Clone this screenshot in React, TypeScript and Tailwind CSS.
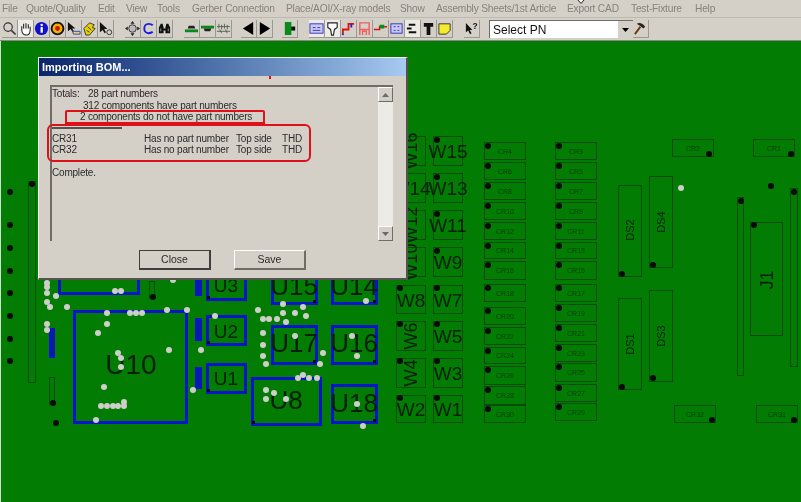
import React from "react";

const BT = 41;
const FONT = "font-['Liberation_Sans',Arial,sans-serif]";

const menu: [string, number][] = [
  ["File", 2], ["Quote/Quality", 26], ["Edit", 98], ["View", 126], ["Tools", 157],
  ["Gerber Connection", 192], ["Place/AOI/X-ray models", 286], ["Show", 400],
  ["Assembly Sheets/1st Article", 436], ["Export CAD", 567], ["Test-Fixture", 631], ["Help", 695],
];

type B = [number, number, number, number];
const boxes: B[] = [
  [395, 136, 30, 30], [432, 136, 30, 30], [395, 173, 30, 30], [432, 173, 30, 30],
  [395, 210, 30, 30], [432, 210, 30, 30], [395, 247, 30, 30], [432, 247, 30, 30],
  [395, 285, 30, 29], [432, 285, 30, 29], [395, 321, 30, 30], [432, 321, 30, 30],
  [395, 358, 30, 30], [432, 358, 30, 30], [395, 395, 30, 28], [432, 395, 30, 28],
];
const crCols: [number, [string, number, number][]][] = [
  [483, [["CR4", 142, 18], ["CR6", 162, 18], ["CR8", 182, 18], ["CR10", 202, 18], ["CR12", 222, 18], ["CR14", 242, 17], ["CR16", 261, 19], ["CR18", 284, 18], ["CR20", 307, 18], ["CR22", 327, 18], ["CR24", 347, 17], ["CR26", 366, 19], ["CR28", 386, 19], ["CR30", 405, 18]]],
  [554, [["CR3", 142, 18], ["CR5", 162, 18], ["CR7", 182, 18], ["CR9", 202, 18], ["CR11", 222, 18], ["CR13", 242, 17], ["CR15", 261, 19], ["CR17", 284, 18], ["CR19", 304, 18], ["CR21", 324, 18], ["CR23", 344, 18], ["CR25", 363, 19], ["CR27", 384, 18], ["CR29", 403, 18]]],
];
const crRight: [string, number, number][] = [["CR2", 671, 139], ["CR1", 752, 139], ["CR32", 673, 405], ["CR31", 755, 405]];
const outlines: B[] = [
  [617, 185, 24, 92], [648, 176, 24, 92], [617, 298, 24, 92], [648, 290, 24, 92],
  [736, 197, 7, 179], [789, 188, 8, 179], [749, 222, 33, 114], [27, 181, 8, 202], [148, 281, 6, 18], [48, 377, 6, 28],
];
const blue: B[] = [
  [72, 310, 115, 114], [57, 270, 82, 25], [205, 270, 41, 31], [205, 315, 41, 31], [205, 363, 41, 31],
  [270, 270, 47, 35], [330, 270, 47, 35], [270, 325, 47, 40], [330, 325, 47, 40], [250, 377, 71, 49], [330, 384, 47, 40],
];
const blueSmall: B[] = [[194, 280, 7, 16], [194, 318, 7, 23], [194, 367, 7, 22], [48, 328, 6, 30]];
const big: [string, number, number, number, number?][] = [
  ["W16", 410, 151, 18, -90], ["W15", 447, 151, 19], ["W14", 410, 188, 19], ["W13", 447, 188, 19],
  ["W12", 410, 225, 18, -90], ["W11", 447, 225, 19], ["W10", 410, 262, 18, -90], ["W9", 447, 262, 19],
  ["W8", 410, 300, 19], ["W7", 447, 300, 19], ["W6", 410, 336, 18, -90], ["W5", 447, 336, 19],
  ["W4", 410, 373, 18, -90], ["W3", 447, 373, 19], ["W2", 410, 409, 19], ["W1", 447, 409, 19],
  ["U10", 130, 365, 28], ["U3", 225, 285, 19], ["U2", 225, 331, 19], ["U1", 225, 378, 19],
  ["U15", 293, 286, 26], ["U14", 353, 286, 26], ["U17", 293, 343, 26], ["U16", 353, 343, 26],
  ["U8", 285, 400, 26], ["U18", 353, 403, 26], ["J1", 766, 280, 18, -90],
  ["DS2", 629, 230, 11, -90], ["DS4", 660, 222, 11, -90], ["DS1", 629, 344, 11, -90], ["DS3", 660, 336, 11, -90],
];
const blackDots: [number, number][] = [
  [9, 192], [9, 225], [9, 248], [9, 271], [9, 293], [9, 316], [9, 339], [9, 361], [31, 184], [52, 403], [55, 423], [152, 297],
  [621, 274], [652, 265], [770, 186], [740, 201], [793, 192], [753, 225], [621, 387], [652, 378],
  [708, 154], [790, 154], [711, 420], [793, 420],
  [399, 140], [436, 140], [399, 177], [436, 177], [436, 214], [436, 251], [399, 288], [436, 288], [399, 324], [436, 324], [399, 361], [436, 361], [399, 398], [436, 398],
];
const pins: [number, number][] = [[207, 297], [207, 342], [207, 390], [252, 422], [313, 301], [373, 301], [313, 361], [373, 361], [373, 420]];
const white: [number, number][] = [
  [46, 283], [46, 287], [46, 293], [55, 296], [46, 302], [49, 307], [66, 307], [46, 324], [46, 330], [114, 291], [120, 291], [172, 280],
  [106, 313], [129, 313], [135, 313], [141, 313], [166, 310], [186, 310], [106, 324], [97, 333], [117, 353], [120, 358], [120, 367], [168, 350],
  [103, 387], [123, 402], [100, 406], [106, 406], [112, 406], [117, 406], [123, 406], [95, 420], [200, 350], [192, 390], [214, 316], [257, 310],
  [262, 319], [268, 319], [276, 319], [282, 313], [282, 304], [302, 307], [294, 313], [305, 316], [285, 322], [262, 333], [262, 345], [262, 356],
  [265, 364], [294, 336], [322, 353], [319, 364], [351, 336], [356, 356], [365, 301], [297, 378], [302, 375], [308, 378], [316, 378], [265, 390],
  [273, 393], [265, 399], [285, 399], [356, 404], [362, 426], [680, 188],
];

const pos = (x: number, y: number, w?: number, h?: number) => ({ left: x, top: y - BT, width: w, height: h });

function CRBox({ name, x, y, h }: { name: string; x: number; y: number; h: number }) {
  return (
    <div className="absolute flex items-center justify-center border border-[#0a4a0a] text-[7px] leading-none text-[#063f06]" style={pos(x, y, 42, h)}>
      {name}
    </div>
  );
}

function Dot({ x, y, size, cls }: { x: number; y: number; size: number; cls: string }) {
  return <div className={`absolute rounded-full ${cls}`} style={pos(x - size / 2, y - size / 2, size, size)} />;
}

function Btn({ children, pressed }: { children: React.ReactNode; pressed?: boolean }) {
  return (
    <div className={`flex h-[18px] w-[16px] shrink-0 items-center justify-center border-r border-b border-[#9a9892] ${pressed ? "bg-[#ecebe6]" : ""}`}>
      <svg viewBox="0 0 16 16" className="h-[15px] w-[15px]">{children}</svg>
    </div>
  );
}

const Group = ({ children, ml }: { children: React.ReactNode; ml: string }) => (
  <div className={`flex shrink-0 ${ml}`}>{children}</div>
);

function Scroll({ up }: { up?: boolean }) {
  return (
    <div className="flex h-[15px] w-[15px] items-center justify-center border-t border-l border-white border-r border-b border-r-[#6f6d68] border-b-[#6f6d68] bg-[#d4d0c8]">
      <svg viewBox="0 0 7 4" className="h-[4px] w-[7px]"><path d={up ? "M0 4 3.5 0 7 4z" : "M0 0 3.5 4 7 0z"} fill="#6a6a66" /></svg>
    </div>
  );
}

export default function App() {
  return (
    <div className={`relative flex h-[502px] w-[801px] flex-col overflow-hidden bg-[#d4d0c8] blur-[0.35px] ${FONT}`}>
      <div className="relative h-[18px] shrink-0 border-b border-[#bdbab2] text-[10.2px] leading-[18px] tracking-[-0.2px] text-[#85837d]">
        {menu.map(([t, x]) => (
          <span key={t} className="absolute top-0 whitespace-nowrap" style={{ left: x }}>{t}</span>
        ))}
        <svg viewBox="0 0 8 5" className="absolute left-[577px] top-0 h-[5px] w-[8px]"><path d="M1 0 4 3.5 7 0" fill="#fff" stroke="#222" /></svg>
      </div>

      <div className="flex h-[23px] shrink-0 items-center border-b border-[#8a8882] pl-[2px]">
        <Group ml="ml-0">
          <Btn><circle cx="6.5" cy="6.5" r="4.5" fill="none" stroke="#333" strokeWidth="1.2" /><path d="M10 10l4.5 4.5" stroke="#333" strokeWidth="1.6" /></Btn>
          <Btn pressed><path d="M4 9V5.5M6 8V3M8.5 8V2.5M11 8V3.5M13 9V6M4 9c0 4 2 6 5 6s4-2 4-6" fill="#fff" stroke="#222" strokeWidth="1.1" /></Btn>
          <Btn><circle cx="8" cy="8" r="7" fill="#1111cc" /><rect x="7" y="6.5" width="2.4" height="6" fill="#fff" /><circle cx="8.2" cy="4.2" r="1.3" fill="#fff" /></Btn>
          <Btn><circle cx="8" cy="8" r="6.3" fill="#f2b400" stroke="#111" strokeWidth="2" /><circle cx="8" cy="8" r="2.6" fill="#cc1111" /></Btn>
          <Btn><path d="M2 1v10l3-2.5L7 12l1.5-1L6.5 8H10z" fill="#111" /><path d="M7 11h8v3H8z" fill="#e8d070" stroke="#3344bb" /></Btn>
          <Btn><path d="M2 8l6-6 5 2-2 3 3 1-6 7H4z" fill="#e6d000" stroke="#333" /><path d="M6 6l4 4M5 10l3 2" stroke="#333" /></Btn>
          <Btn><path d="M2 1v11l3-2.5L7 13l1.500-1L6.500 8.500H10z" fill="#111" /><circle cx="12" cy="12" r="2.6" fill="none" stroke="#333" /></Btn>
        </Group>
        <Group ml="ml-[11px]">
          <Btn><circle cx="8" cy="8" r="4" fill="#bbb" stroke="#333" /><path d="M8 0 5.8 3h4.4zM8 16l-2.2-3h4.4zM0 8l3-2.2v4.4zM16 8l-3-2.2v4.4z" fill="#222" /></Btn>
          <Btn><path d="M12.5 4.5C11 3 9.5 3 8 3 5 3 3.5 5.5 3.5 8S5 13 8 13c1.500 0 3 0 4.500-1.500" fill="none" stroke="#1a1ae0" strokeWidth="2" /></Btn>
          <Btn><path d="M2 13V7l2-4h2l1 4v1h2V7l1-4h2l2 4v6h-5V10H7v3z" fill="#111" /><path d="M4 8v3M12 8v3" stroke="#999" /></Btn>
        </Group>
        <Group ml="ml-[11px]">
          <Btn><path d="M5 5h6l1 3H4z" fill="#222" /><path d="M1 9h14v3H1z" fill="#0a8a1a" /></Btn>
          <Btn><path d="M1 5h14v3H1z" fill="#0a8a1a" /><path d="M4 8h8l-1 3H5z" fill="#222" /></Btn>
          <Btn><path d="M1 6h14M1 11h14M3 3v5M6 4v5M9 3v5M12 4v5M4 9l2 4M10 9l2 4" stroke="#4a5a4a" strokeWidth=".9" fill="none" /></Btn>
        </Group>
        <Group ml="ml-[9px]">
          <Btn><path d="M13 1v14L2 8z" fill="#000" /></Btn>
          <Btn><path d="M3 1v14l11-7z" fill="#000" /></Btn>
        </Group>
        <Group ml="ml-[9px]">
          <Btn><path d="M3 1h7v5h4v4h-4v5H3z" fill="#0a8a1a" /><rect x="10" y="6" width="4" height="4" fill="#111" /></Btn>
        </Group>
        <Group ml="ml-[11px]">
          <Btn pressed><rect x="1" y="3" width="14" height="10" fill="#c8c8f0" stroke="#3333bb" /><path d="M4 7h3M9 7h3M4 10h8" stroke="#3333bb" /></Btn>
          <Btn pressed><path d="M3 2h10v5l-3 2-1 6H7L6 9 3 7z" fill="#fff" stroke="#222" strokeWidth="1.200" /></Btn>
          <Btn><path d="M2 13V9h6V3h6" fill="none" stroke="#e01010" strokeWidth="2" /><path d="M11 3v4" stroke="#2222cc" strokeWidth="2" /><path d="M2 13v2" stroke="#2222cc" strokeWidth="2" /></Btn>
          <Btn><path d="M3 15V2h10v13M3 9h10M6 15v-4h4v4" fill="none" stroke="#ee6060" strokeWidth="1.500" /></Btn>
          <Btn><path d="M1 9h6V6h8" fill="none" stroke="#e01010" strokeWidth="1.600" /><rect x="7" y="4" width="5" height="4" fill="#0a8a1a" /></Btn>
          <Btn><rect x="2" y="3" width="12" height="10" fill="#c8c8f0" stroke="#3333bb" /><path d="M5 6h2M9 6h2M5 10h2M9 10h2" stroke="#3333bb" /></Btn>
          <Btn pressed><path d="M4 4h7M2 8h5M4 12h8" stroke="#111" strokeWidth="2" /></Btn>
          <Btn><path d="M3 2h10v4H10v9H6V6H3z" fill="#111" /></Btn>
          <Btn><path d="M2 3h12v7l-4 4H2z" fill="#f4ea30" stroke="#333" /></Btn>
        </Group>
        <Group ml="ml-[11px]">
          <Btn><path d="M2 2v10l2.500-2 2 4 1.500-1-2-3.500H9z" fill="#111" /><text x="9" y="9" fontSize="9" fontWeight="700" fill="#111">?</text></Btn>
        </Group>
        <div className="ml-[9px] flex h-[18px] w-[144px] shrink-0 items-center border-t border-l border-[#6f6d68] bg-white pl-[3px] text-[12px] text-[#111]">
          Select PN
          <div className="ml-auto flex h-full w-[15px] items-center justify-center bg-[#d4d0c8]">
            <svg viewBox="0 0 7 4" className="h-[4px] w-[7px]"><path d="M0 0 3.5 4 7 0z" fill="#000" /></svg>
          </div>
        </div>
        <Btn><path d="M8 6 2 14" stroke="#6a3a10" strokeWidth="2" /><path d="M4 3c3-2 6-1 9 3l-2 2C9 6 7 5 4 3z" fill="#222" /></Btn>
      </div>

      <div className="relative flex-1 border-l border-[#cfe3cf] bg-[#027c02]">
        {boxes.map(([x, y, w, h]) => (
          <div key={`${x}-${y}`} className="absolute border border-[#0a4a0a]" style={pos(x, y, w, h)} />
        ))}
        {crCols.map(([x, items]) => items.map(([n, y, h]) => <CRBox key={n} name={n} x={x} y={y} h={h} />))}
        {crCols.map(([x, items]) => items.map(([n, y]) => <Dot key={n} x={x + 4} y={y + 4} size={6} cls="bg-[#0a0a0a]" />))}
        {crRight.map(([n, x, y]) => <CRBox key={n} name={n} x={x} y={y} h={18} />)}
        {outlines.map(([x, y, w, h]) => (
          <div key={`${x}-${y}`} className="absolute border border-[#0a4a0a]" style={pos(x, y, w, h)} />
        ))}
        {blue.map(([x, y, w, h]) => (
          <div key={`${x}-${y}`} className="absolute border-[3px] border-[#0a14cc]" style={pos(x, y, w, h)} />
        ))}
        {blueSmall.map(([x, y, w, h]) => (
          <div key={`${x}-${y}`} className="absolute flex justify-center bg-[#0a14cc] py-[3px]" style={pos(x, y, w, h)}>
            <div className="w-[1px] bg-[#052a55]" />
          </div>
        ))}
        {big.map(([t, x, y, s, r]) => (
          <span
            key={t}
            className="absolute whitespace-nowrap leading-none text-[#041f06]"
            style={{ left: x, top: y - BT, fontSize: s, transform: `translate(-50%,-50%)${r ? ` rotate(${r}deg)` : ""}` }}
          >
            {t}
          </span>
        ))}
        {blackDots.map(([x, y]) => <Dot key={`${x}-${y}`} x={x} y={y} size={6} cls="bg-[#0a0a0a]" />)}
        {pins.map(([x, y]) => (
          <div key={`${x}-${y}`} className="absolute bg-[#0a0a0a]" style={pos(x - 1, y - 1, 3, 3)} />
        ))}
        {white.map(([x, y]) => <Dot key={`${x}-${y}`} x={x} y={y} size={6} cls="bg-[#cfcfca]" />)}

        <div className="absolute left-[37px] top-[16px] flex h-[223px] w-[370px] flex-col border-t border-l border-[#f4f3ef] border-r-2 border-b-2 border-r-[#55534e] border-b-[#55534e] bg-[#d4d0c8] text-[10px] tracking-[-0.2px] text-[#2b2b2b]">
          <div className="flex h-[18px] shrink-0 items-center bg-gradient-to-r from-[#0a246a] to-[#a6caf0] pl-[3px] text-[11px] font-bold tracking-normal text-white">
            Importing BOM...
          </div>
          <div className="relative ml-[11px] mt-[9px] flex h-[156px] w-[343px] border-t-2 border-l-2 border-[#6f6d68]">
            <div className="flex-1 whitespace-nowrap pt-[1px] leading-[11.6px]">
              <div className="flex"><span className="w-[36px]">Totals:</span><span>28 part numbers</span></div>
              <div className="pl-[31px]">312 components have part numbers</div>
              <div className="pl-[28px]">2 components do not have part numbers</div>
              <div className="mt-[4px] h-[2px] w-[70px] bg-[#55534e]" />
              <div className="mt-[4px] flex"><span className="w-[92px]">CR31</span><span className="w-[92px]">Has no part number</span><span className="w-[46px]">Top side</span><span>THD</span></div>
              <div className="flex"><span className="w-[92px]">CR32</span><span className="w-[92px]">Has no part number</span><span className="w-[46px]">Top side</span><span>THD</span></div>
              <div className="mt-[11px]">Complete.</div>
            </div>
            <div className="flex w-[15px] shrink-0 flex-col justify-between bg-[#ecebe6]">
              <Scroll up />
              <Scroll />
            </div>
            <div className="absolute left-[13px] top-[23px] h-[14px] w-[200px] rounded-t-[2px] border-[2px] border-[#e0101a]" />
            <div className="absolute left-[-5px] top-[37px] h-[38px] w-[264px] rounded-[6px] border-[2px] border-[#e0101a]" />
          </div>
          <div className="mt-[9px] flex justify-center gap-[23px] text-[10.500px] tracking-normal">
            <div className="flex h-[20px] w-[72px] items-center justify-center border border-[#3f3e3a] border-r-2 border-b-2 bg-[#d4d0c8]">Close</div>
            <div className="flex h-[20px] w-[72px] items-center justify-center border-t border-l border-white border-r-2 border-b-2 border-r-[#6f6d68] border-b-[#6f6d68] bg-[#d4d0c8]">Save</div>
          </div>
          <div className="absolute left-[230px] top-[18px] h-[3px] w-[2px] bg-[#e0101a]" />
        </div>
      </div>
    </div>
  );
}
